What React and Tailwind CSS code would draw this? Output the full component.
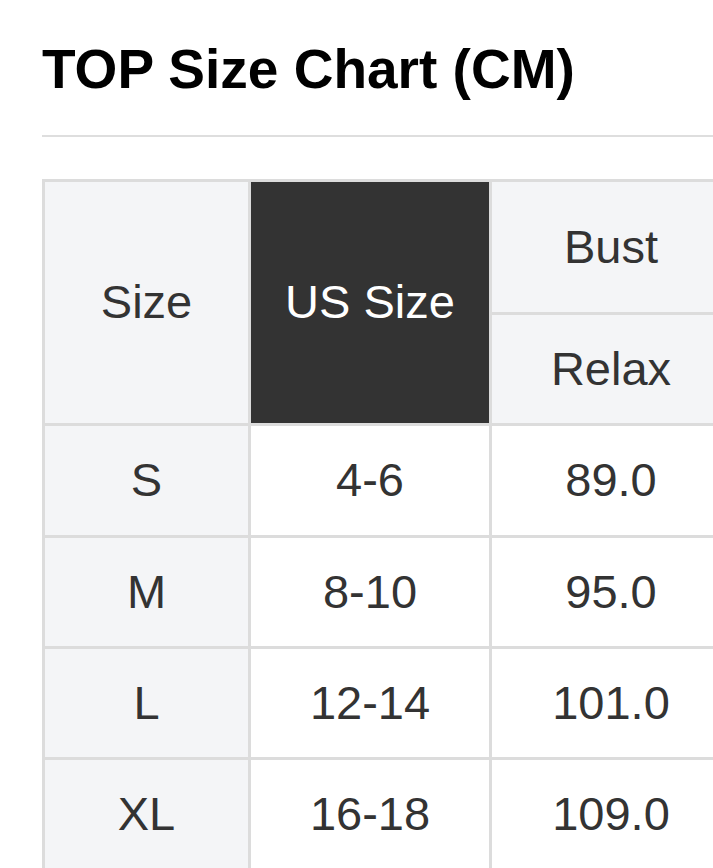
const rows = [
  { size: "S", us: "4-6", bust: "89.0" },
  { size: "M", us: "8-10", bust: "95.0" },
  { size: "L", us: "12-14", bust: "101.0" },
  { size: "XL", us: "16-18", bust: "109.0" },
];

const cell = "flex items-center justify-center text-[47px] text-[#333]";

export default function App() {
  return (
    <div
      className="min-h-[868px] w-full overflow-hidden bg-white pl-[42px] pt-[42px]"
      style={{ fontFamily: '"Liberation Sans", Arial, sans-serif' }}
    >
      <h1 className="text-[55px] font-bold leading-none text-black">
        TOP Size Chart (CM)
      </h1>
      <div className="mt-[38px] h-[2px] w-full bg-[#dedede]" />

      <div className="mt-[42px] grid w-[691px] grid-cols-[203px_238px_238px] grid-rows-[130px_108px_109px_108px_108px_108px] gap-[3px] bg-[#dcdcdc] p-[3px]">
        <div className={`${cell} row-span-2 bg-[#f4f5f7]`}>Size</div>
        <div className={`${cell} row-span-2 bg-[#333333] text-white`}>US Size</div>
        <div className={`${cell} bg-[#f4f5f7]`}>Bust</div>
        <div className={`${cell} bg-[#f4f5f7]`}>Relax</div>

        {rows.map((r) => (
          <div key={r.size} className="contents">
            <div className={`${cell} bg-[#f4f5f7]`}>{r.size}</div>
            <div className={`${cell} bg-white`}>{r.us}</div>
            <div className={`${cell} bg-white`}>{r.bust}</div>
          </div>
        ))}
      </div>
    </div>
  );
}
